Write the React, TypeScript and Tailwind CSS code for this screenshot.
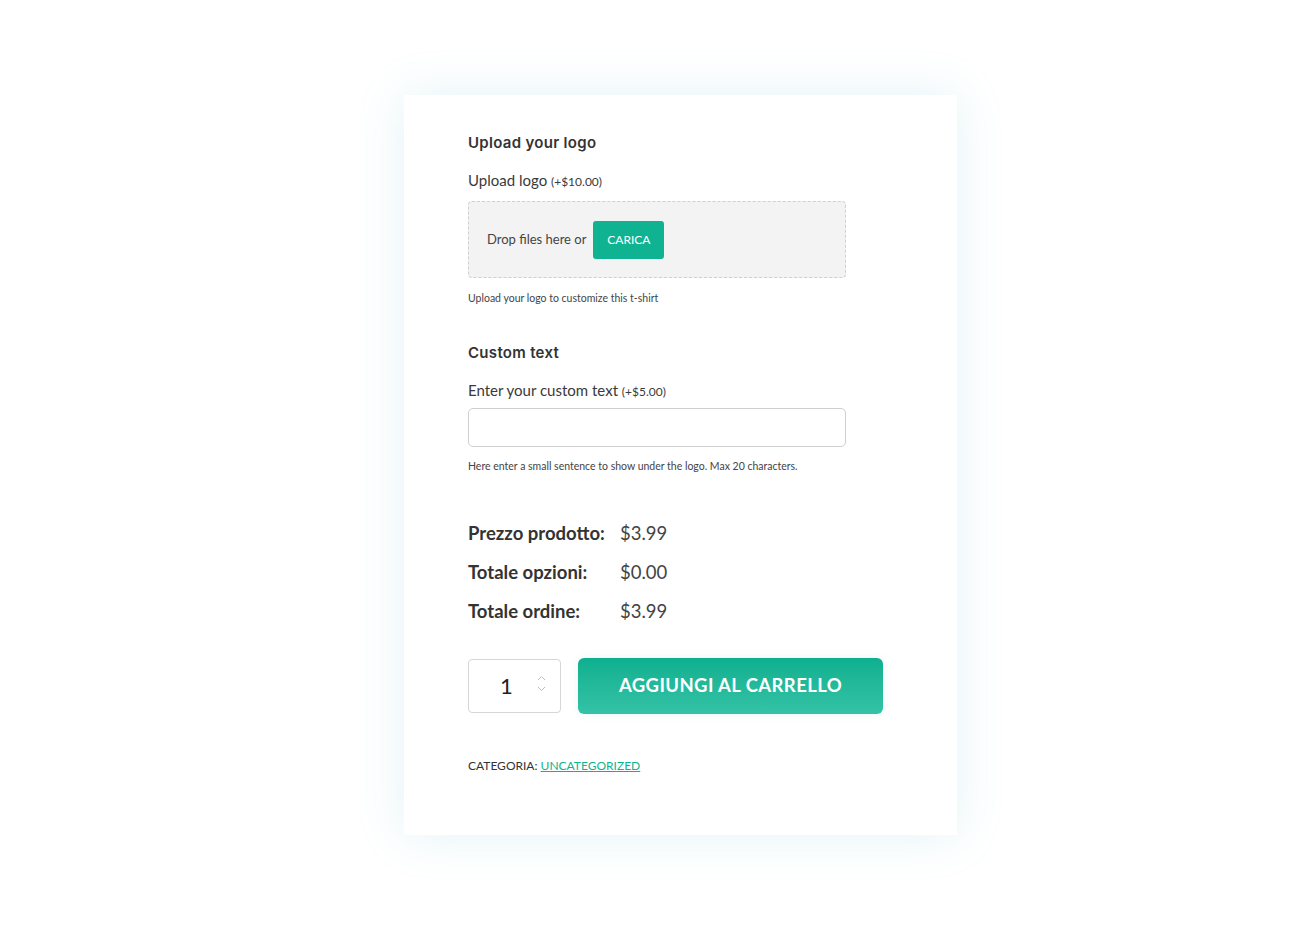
import React from "react";

export default function App() {
  return (
    <div className="min-h-[928px] w-full bg-white flex justify-center pt-[95px] pl-[61px]" style={{ fontFamily: "Lato, 'Open Sans', sans-serif" }}>
      <div className="w-[553px] h-[740px] bg-white shadow-[0_0_45px_rgba(90,180,210,0.16)] pl-[64px] pt-[37px] text-[#333]">
        <h3 className="text-[15px] font-semibold text-[#333] leading-[22px] tracking-[0.3px]" style={{ fontFamily: "Inter, 'Open Sans', sans-serif" }}>Upload your logo</h3>
        <div className="mt-[16px] text-[15px] leading-[20px] text-[#3a3a3a]">
          Upload logo <span className="text-[12px]">(+$10.00)</span>
        </div>
        <div className="mt-[9px] w-[378px] h-[77px] bg-[#f3f3f3] border border-dashed border-[#cfcfcf] rounded-[4px] flex items-center pl-[18px]">
          <span className="text-[13px] text-[#444]">Drop files here or</span>
          <button className="ml-[7px] w-[71px] h-[38px] bg-[#10b391] rounded-[3px] text-white text-[12px]">CARICA</button>
        </div>
        <p className="mt-[13px] text-[10.5px] text-[#444]">Upload your logo to customize this t-shirt</p>

        <h3 className="mt-[35px] text-[15px] font-semibold text-[#333] leading-[22px] tracking-[0.3px]" style={{ fontFamily: "Inter, 'Open Sans', sans-serif" }}>Custom text</h3>
        <div className="mt-[16px] text-[15px] leading-[20px] text-[#3a3a3a]">
          Enter your custom text <span className="text-[12px]">(+$5.00)</span>
        </div>
        <div className="mt-[6px] w-[378px] h-[39px] border border-[#cfcfcf] rounded-[5px] bg-white" />
        <p className="mt-[12px] text-[10.5px] text-[#444]">Here enter a small sentence to show under the logo. Max 20 characters.</p>

        <div className="mt-[45px] flex flex-col gap-[13px] text-[18.5px] leading-[26px]">
          <div className="flex">
            <span className="w-[152px] font-bold text-[#333]">Prezzo prodotto:</span>
            <span className="text-[#444]">$3.99</span>
          </div>
          <div className="flex">
            <span className="w-[152px] font-bold text-[#333]">Totale opzioni:</span>
            <span className="text-[#444]">$0.00</span>
          </div>
          <div className="flex">
            <span className="w-[152px] font-bold text-[#333]">Totale ordine:</span>
            <span className="text-[#444]">$3.99</span>
          </div>
        </div>

        <div className="mt-[34px] flex items-center">
          <div className="w-[93px] h-[54px] border border-[#d6d6d6] rounded-[4px] flex items-center relative">
            <span className="ml-[31px] text-[22px] text-[#222]">1</span>
            <div className="absolute right-[14px] top-[15px] flex flex-col gap-[5px]">
              <svg width="9" height="6" viewBox="0 0 9 6"><path d="M1 5 L4.5 1.5 L8 5" fill="none" stroke="#bdbdbd" strokeWidth="1" /></svg>
              <svg width="9" height="6" viewBox="0 0 9 6"><path d="M1 1 L4.5 4.5 L8 1" fill="none" stroke="#bdbdbd" strokeWidth="1" /></svg>
            </div>
          </div>
          <button className="ml-[17px] w-[305px] h-[56px] rounded-[6px] bg-gradient-to-b from-[#0cb08f] to-[#33c2a7] text-white text-[18.5px] font-bold tracking-[0.4px] shadow-[0_0_10px_rgba(0,150,130,0.08)]">
            AGGIUNGI AL CARRELLO
          </button>
        </div>

        <div className="mt-[43px] text-[12px] text-[#333]">
          CATEGORIA: <a className="text-[#10b391] underline">UNCATEGORIZED</a>
        </div>
      </div>
    </div>
  );
}
